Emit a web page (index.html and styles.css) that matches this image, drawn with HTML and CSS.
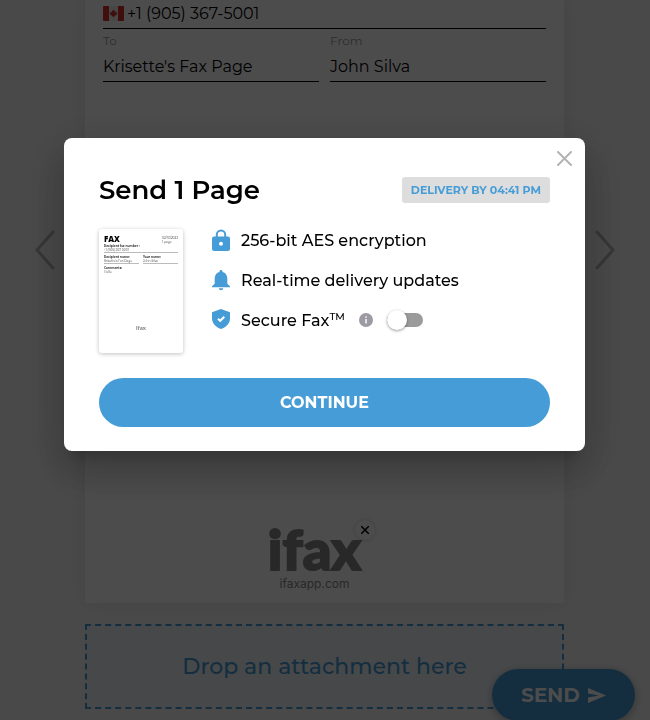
FILE: index.html
```html
<!DOCTYPE html>
<html lang="en">
<head>
    <meta charset="UTF-8">
    <meta name="viewport" content="width=device-width, initial-scale=1.0">
    <title>iFax - Send 1 Page</title>
    <link rel="stylesheet" href="styles.css">
</head>
<body>
    <main class="page">
        <div class="stage">
            <button class="arrow prev" type="button" aria-label="Previous page">
                <svg width="20" height="40" viewBox="0 0 20 40"><path d="M18 2 2 20 18 38"/></svg>
            </button>

            <form class="sheet">
                <div class="field phone">
                    <svg class="flag" width="21" height="15" viewBox="0 0 21 15">
                        <rect width="21" height="15" rx="1" fill="#eee"/>
                        <path d="M1 0h5v15H1a1 1 0 0 1-1-1V1a1 1 0 0 1 1-1zM15 0h5a1 1 0 0 1 1 1v13a1 1 0 0 1-1 1h-5z" fill="#d8322e"/>
                        <path d="M10.500 3.500l.9 1.500.9-.4-.3 2 1.100-.9.300.7 1.100-.1-.8 1.400.5.500-2.200 1.500.1.800-1.400-.2v1.500h-.4v-1.500l-1.400.2.1-.8L6.800 8.200l.5-.5-.8-1.400 1.100.1.300-.7 1.100.9-.3-2 .9.400z" fill="#d8322e"/>
                    </svg>
                    <input type="tel" aria-label="Fax number" value="+1 (905) 367-5001">
                </div>
                <div class="names">
                    <div class="field">
                        <label for="to">To</label>
                        <input id="to" type="text" value="Krisette's Fax Page">
                    </div>
                    <div class="field">
                        <label for="from">From</label>
                        <input id="from" type="text" value="John Silva">
                    </div>
                </div>
                <div class="brand">
                    <span class="brand-name">ifax</span>
                    <span class="brand-url">ifaxapp.com</span>
                    <button class="brand-remove" type="button" aria-label="Remove logo">
                        <svg width="8" height="8" viewBox="0 0 8 8"><path d="M0 0l8 8M8 0L0 8"/></svg>
                    </button>
                </div>
            </form>

            <button class="arrow next" type="button" aria-label="Next page">
                <svg width="20" height="40" viewBox="0 0 20 40"><path d="M2 2 18 20 2 38"/></svg>
            </button>
        </div>

        <div class="dropzone">Drop an attachment here</div>

        <button class="send-btn" type="button">
            SEND
            <svg width="18" height="15" viewBox="0 0 18 15"><path d="M0 0l18 7.500L0 15V9.500L11 7.500 0 5.500z"/></svg>
        </button>
    </main>

    <div class="overlay">
        <div class="modal" role="dialog" aria-modal="true" aria-labelledby="modal-title">
            <button class="close-btn" type="button" aria-label="Close">
                <svg width="15" height="15" viewBox="0 0 15 15"><path d="M1 1l13 13M14 1L1 14"/></svg>
            </button>

            <div class="modal-header">
                <h1 id="modal-title">Send 1 Page</h1>
                <span class="delivery">DELIVERY BY 04:41 PM</span>
            </div>

            <div class="modal-body">
                <div class="thumb">
                    <div class="thumb-head">
                        <strong>FAX</strong>
                        <span>02/10/2023<br>1 page</span>
                    </div>
                    <p class="thumb-line"><b>Recipient fax number :</b><br>+1 (905) 367-5001</p>
                    <div class="thumb-cols">
                        <p class="thumb-line"><b>Recipient name:</b><br>Krisette's Fax Page</p>
                        <p class="thumb-line"><b>Your name:</b><br>John Silva</p>
                    </div>
                    <p class="thumb-note"><b>Comments:</b><br>Hello</p>
                    <span class="thumb-brand">ifax</span>
                </div>

                <ul class="features">
                    <li>
                        <svg width="18" height="22" viewBox="0 0 18 22">
                            <path fill-rule="evenodd" d="M3.800 7.500V5.700a5.200 5.200 0 0 1 10.400 0v1.800H16a2 2 0 0 1 2 2V20a2 2 0 0 1-2 2H2a2 2 0 0 1-2-2V9.500a2 2 0 0 1 2-2zm2 0h6.400V5.700a3.200 3.200 0 0 0-6.400 0zM9 12.700a2 2 0 1 0 0 4 2 2 0 0 0 0-4z"/>
                        </svg>
                        256-bit AES encryption
                    </li>
                    <li>
                        <svg width="18" height="22" viewBox="0 0 18 22">
                            <path d="M9 1c.9 0 1.500.6 1.500 1.500v.6c3 .7 4.800 3.200 4.800 6.400v5.200l2.700 2.600v1H0v-1l2.700-2.600V9.500c0-3.200 1.800-5.700 4.800-6.400v-.6C7.500 1.600 8.100 1 9 1zM6.800 19.300h4.400A2.200 2.200 0 0 1 9 21.300a2.200 2.200 0 0 1-2.200-2z"/>
                        </svg>
                        Real-time delivery updates
                    </li>
                    <li>
                        <svg width="18" height="22" viewBox="0 0 18 22">
                            <path d="M9 0l9 3.300v6C18 14 14.500 18.300 9 20 3.500 18.300 0 14 0 9.300v-6z"/>
                            <path class="check" d="M6 9.700l2.200 2.100L12.300 7.700"/>
                        </svg>
                        <label for="secure">Secure Fax<sup>TM</sup></label>
                        <button class="info-btn" type="button" aria-label="About Secure Fax">
                            <svg width="14" height="14" viewBox="0 0 14 14">
                                <circle cx="7" cy="7" r="7"/>
                                <path d="M6.300 3.300h1.400v1.400H6.300zM6.300 6h1.400v4.500H6.300z"/>
                            </svg>
                        </button>
                        <input id="secure" class="switch" type="checkbox" role="switch">
                    </li>
                </ul>
            </div>

            <button class="continue-btn" type="button">CONTINUE</button>
        </div>
    </div>
</body>
</html>
```

FILE: styles.css
```css
* {
    box-sizing: border-box;
}
body {
    margin: 0;
    font-family: Montserrat, Inter, sans-serif;
    font-size: 16px;
    color: #000;
    background: #f5f5f5;
}
button, input {
    font: inherit;
    color: inherit;
    border: none;
    background: none;
    padding: 0;
    margin: 0;
}
button {
    cursor: pointer;
}
svg {
    display: block;
    flex-shrink: 0;
}
p, h1, ul {
    margin: 0;
    padding: 0;
}

/* page behind the dialog */
.page {
    display: flex;
    flex-direction: column;
    gap: 21px;
    min-height: 100vh;
    padding-bottom: 11px;
}
.stage {
    flex: 1;
    display: grid;
    grid-template-columns: 85px 1fr 86px;
}
.arrow {
    align-self: start;
    justify-self: center;
    margin-top: 230px;
}
.prev {
    padding-left: 4px;
}
.next {
    padding-right: 4px;
}
.arrow svg {
    fill: none;
    stroke: #b5b5b5;
    stroke-width: 3;
    stroke-linecap: round;
}
.sheet {
    display: flex;
    flex-direction: column;
    padding: 0 18px 12px;
    background: #fff;
    box-shadow: 0 0 20px rgba(0, 0, 0, 0.08);
}
.field {
    border-bottom: 1px solid #000;
}
.field input {
    display: block;
    width: 100%;
    height: 30px;
    outline: none;
}
.field label {
    display: block;
    font-size: 12px;
    line-height: 20px;
    color: #999;
}
.phone {
    display: flex;
    align-items: flex-start;
    gap: 3px;
    height: 29px;
}
.flag {
    margin-top: 6px;
}
.phone input {
    height: 26px;
}
.names {
    display: grid;
    grid-template-columns: 1fr 1fr;
    gap: 11px;
    margin-top: 2px;
}
.brand {
    position: relative;
    display: flex;
    flex-direction: column;
    align-items: center;
    align-self: center;
    margin-top: auto;
    padding-right: 20px;
    color: #888;
}
.brand-name {
    font-family: Lato, sans-serif;
    font-size: 56px;
    font-weight: 900;
    line-height: 56px;
    -webkit-text-stroke: 2px #888;
}
.brand-url {
    font-family: Inter, sans-serif;
    font-size: 12px;
    line-height: 14px;
}
.brand-remove {
    position: absolute;
    top: -1px;
    right: 6px;
    padding: 6px;
    border-radius: 50%;
    background: #fff;
    box-shadow: 0 0 4px rgba(0, 0, 0, 0.2);
}
.brand-remove svg {
    stroke: #000;
    stroke-width: 1.5;
}
.dropzone {
    display: flex;
    align-items: center;
    justify-content: center;
    height: 85px;
    margin: 0 86px 0 85px;
    border: 2px dashed #459cd7;
    background: #ecf2f6;
    color: #459cd7;
    font-size: 22px;
    font-weight: 500;
}
.send-btn {
    position: fixed;
    right: 15px;
    bottom: -1px;
    display: flex;
    align-items: center;
    gap: 8px;
    height: 52px;
    padding: 0 29px;
    border-radius: 26px;
    background: #459cd7;
    box-shadow: 0 2px 8px rgba(0, 0, 0, 0.3);
    color: #fff;
    font-size: 20px;
    font-weight: 700;
}
.send-btn svg {
    fill: #fff;
}

/* dialog */
.overlay {
    position: fixed;
    inset: 0;
    display: flex;
    align-items: flex-start;
    justify-content: center;
    padding: 138px 65px 0 64px;
    background: rgba(0, 0, 0, 0.7);
}
.modal {
    position: relative;
    width: 100%;
    max-width: 640px;
    padding: 39px 35px 24px;
    border-radius: 8px;
    background: #fff;
    box-shadow: 0 11px 15px -7px rgba(0, 0, 0, 0.2), 0 24px 38px 3px rgba(0, 0, 0, 0.14), 0 9px 46px 8px rgba(0, 0, 0, 0.12);
}
.close-btn {
    position: absolute;
    top: 13px;
    right: 13px;
}
.close-btn svg {
    fill: none;
    stroke: #b3b3b3;
    stroke-width: 2;
    stroke-linecap: round;
}
.modal-header {
    display: flex;
    align-items: center;
    justify-content: space-between;
    height: 26px;
}
h1 {
    font-size: 26px;
    font-weight: 600;
    line-height: 26px;
}
.delivery {
    padding: 0 9px;
    border-radius: 3px;
    background: #ddd;
    color: #459cd7;
    font-size: 11px;
    font-weight: 700;
    line-height: 26px;
}
.modal-body {
    display: flex;
    gap: 29px;
    margin: 25px 0;
}
.features {
    list-style: none;
    font-weight: 500;
}
.features li {
    display: flex;
    align-items: center;
    height: 24px;
    margin-bottom: 16px;
}
.features li > svg {
    margin-right: 11px;
    fill: #459cd7;
}
.features .check {
    fill: none;
    stroke: #fff;
    stroke-width: 2;
}
.features sup {
    font-size: 10px;
    line-height: 0;
}
.info-btn {
    margin: 0 14px;
}
.info-btn circle {
    fill: #9d9aa4;
}
.info-btn path {
    fill: #fff;
}
.switch {
    appearance: none;
    display: flex;
    align-items: center;
    width: 36px;
    height: 14px;
    border-radius: 7px;
    background: #9b9b9b;
    cursor: pointer;
}
.switch::before {
    content: "";
    width: 20px;
    height: 20px;
    border-radius: 50%;
    background: #fff;
    box-shadow: 0 1px 3px rgba(0, 0, 0, 0.4);
}
.switch:checked {
    background: #459cd7;
}
.switch:checked::before {
    margin-left: auto;
}
.continue-btn {
    display: block;
    width: 100%;
    height: 49px;
    border-radius: 25px;
    background: #459cd7;
    color: #fff;
    font-weight: 700;
}

/* fax preview */
.thumb {
    display: flex;
    flex-direction: column;
    width: 84px;
    height: 124px;
    margin-top: 1px;
    padding: 5px;
    border-radius: 3px;
    box-shadow: 0 1px 4px rgba(0, 0, 0, 0.25);
    font-size: 3px;
    line-height: 4px;
    color: #333;
}
.thumb-head {
    display: flex;
    justify-content: space-between;
    height: 10px;
}
.thumb-head strong {
    font-family: "Open Sans", sans-serif;
    font-size: 8px;
    font-weight: 800;
    line-height: 9px;
    color: #000;
}
.thumb-head span {
    padding-top: 2px;
}
.thumb-line {
    margin-bottom: 2px;
    border-bottom: 1px solid #bbb;
}
.thumb-cols {
    display: grid;
    grid-template-columns: 1fr 1fr;
    gap: 4px;
}
.thumb-brand {
    margin: auto auto 18px;
    font-family: Lato, sans-serif;
    font-size: 6px;
    font-weight: 900;
    color: #888;
}
```
